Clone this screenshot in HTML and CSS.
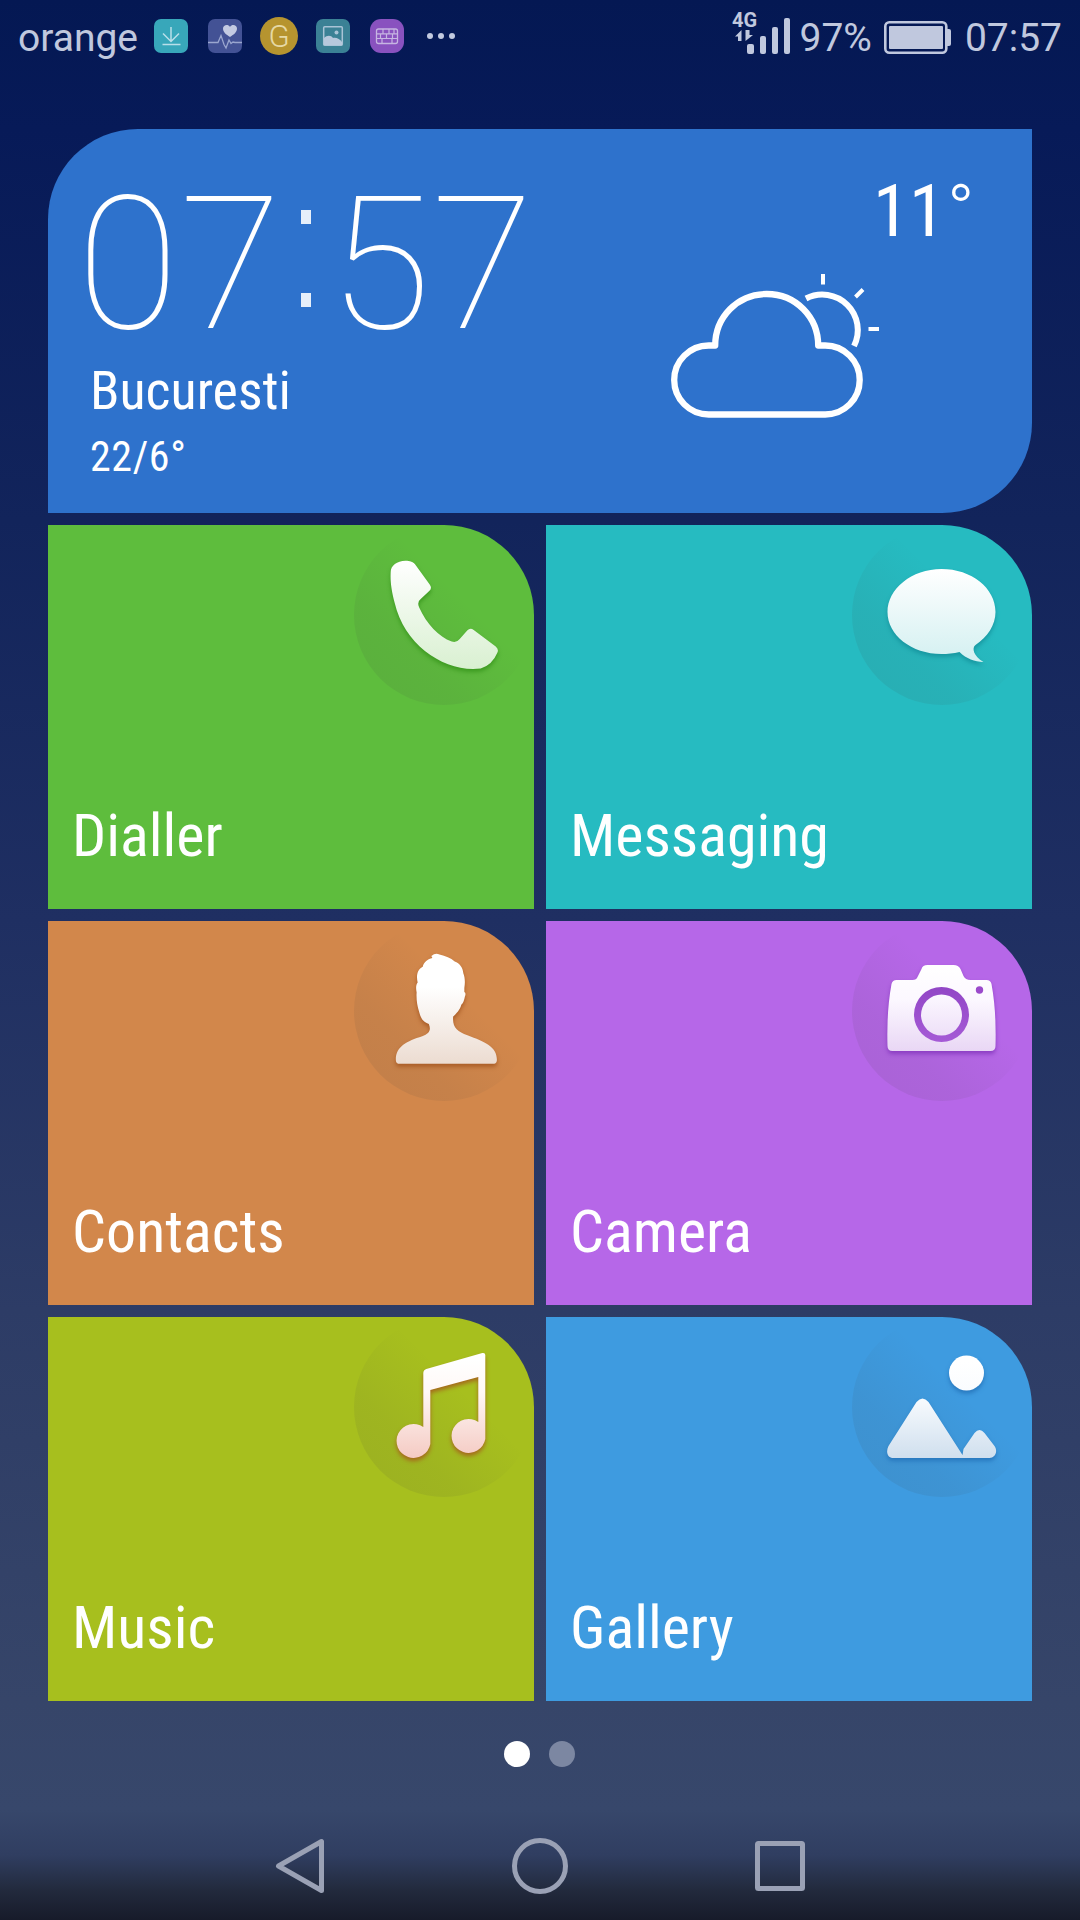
FILE: index.html
```html
<!DOCTYPE html>
<html lang="en">
<head>
<meta charset="utf-8">
<title>Home</title>
<link rel="stylesheet" href="styles.css">
</head>
<body>
<svg class="defs" width="0" height="0" aria-hidden="true">
  <defs>
    <linearGradient id="g-green" x1="0" y1="0" x2="0" y2="1"><stop offset="0" stop-color="#fff"/><stop offset="1" stop-color="#d9f0d1"/></linearGradient>
    <linearGradient id="g-teal" x1="0" y1="0" x2="0" y2="1"><stop offset="0" stop-color="#fff"/><stop offset="1" stop-color="#d3f0f1"/></linearGradient>
    <linearGradient id="g-orange" x1="0" y1="0" x2="0" y2="1"><stop offset="0" stop-color="#fff"/><stop offset=".3" stop-color="#fff"/><stop offset="1" stop-color="#ecdcd1"/></linearGradient>
    <linearGradient id="g-purple" x1="0" y1="0" x2="0" y2="1"><stop offset="0" stop-color="#fff"/><stop offset=".4" stop-color="#fcf8ff"/><stop offset="1" stop-color="#e9d7f5"/></linearGradient>
    <linearGradient id="g-lens" x1="0" y1="0" x2="0" y2="1"><stop offset="0" stop-color="#fcf8ff"/><stop offset="1" stop-color="#eee0f8"/></linearGradient>
    <linearGradient id="g-ring" x1="0" y1="0" x2="0" y2="1"><stop offset="0" stop-color="#9246c6"/><stop offset="1" stop-color="#a55ad6"/></linearGradient>
    <linearGradient id="g-music" gradientUnits="userSpaceOnUse" x1="0" y1="43" x2="0" y2="150"><stop offset="0" stop-color="#fff"/><stop offset=".3" stop-color="#fff8f6"/><stop offset="1" stop-color="#f3c4bc"/></linearGradient>
    <linearGradient id="g-blue" gradientUnits="userSpaceOnUse" x1="0" y1="45" x2="0" y2="148"><stop offset="0" stop-color="#fff"/><stop offset=".35" stop-color="#f8fbfe"/><stop offset="1" stop-color="#cbdcec"/></linearGradient>
  </defs>
</svg>

<header class="status">
  <span class="carrier">orange</span>
  <div class="notices">
    <svg width="34" height="34" viewBox="0 0 34 34"><rect width="34" height="34" rx="7" fill="#38a7ba"/><path d="M17 8v14M9 14.500l8 8 8-8M8.500 25.500h18" fill="none" stroke="#b9dfe9" stroke-width="1.500"/></svg>
    <svg width="34" height="34" viewBox="0 0 34 34"><rect width="34" height="34" rx="7" fill="#435295"/><path d="M22 18c-4-2.500-7-5-7-8.500C15 6 20 4.500 22 8c2-3.500 7-2 7 1.500 0 3.500-3 6-7 8.500z" fill="#c3cae2"/><path d="M0 23.500h10l3-7 3 9 2 3.500 3-8 2 3.500 2-1.500 2 .5h7" fill="none" stroke="#9aa6cf" stroke-width="1.300"/></svg>
    <svg class="round" width="38" height="38" viewBox="0 0 38 38"><circle cx="19" cy="19" r="19" fill="#b6942f"/><text x="19" y="29.500" class="coin">G</text></svg>
    <svg width="34" height="34" viewBox="0 0 34 34"><rect width="34" height="34" rx="7" fill="#3b8195"/><rect x="7.700" y="7.700" width="18.600" height="18.600" rx="1" fill="none" stroke="#a9c3d6" stroke-width="1.500"/><circle cx="20.500" cy="13.500" r="2" fill="#a9c3d6"/><path d="M8 19c3-3 7-3 9 0 3-1 7 1 9 4v3H8z" fill="#b7c8dc"/></svg>
    <svg width="34" height="34" viewBox="0 0 34 34"><rect width="34" height="34" rx="11" fill="#8952bf"/><rect x="6.500" y="10" width="21" height="14.500" rx="2" fill="none" stroke="#c6b5e2" stroke-width="1.300"/><path d="M6.500 14.800h21M6.500 19.500h21M13 10v4.800M19 10v4.800M24 10v4.800M10.500 14.800v4.700M16.500 14.800v4.700M22.500 14.800v4.700M12 19.500v5M22 19.500v5" stroke="#c6b5e2" stroke-width="1.200"/></svg>
    <svg class="more" width="28" height="6" viewBox="0 0 28 6"><g fill="#c2cae0"><circle cx="3" cy="3" r="3"/><circle cx="14" cy="3" r="3"/><circle cx="25" cy="3" r="3"/></g></svg>
  </div>
  <div class="system">
    <svg class="signal" width="60" height="44" viewBox="0 0 60 44"><text x="0" y="15" class="net">4G</text><g fill="#c0c8de"><rect x="15" y="32" width="7" height="10" rx="2"/><rect x="28" y="24" width="6" height="18" rx="2"/><rect x="40" y="15" width="6" height="27" rx="2"/><rect x="52" y="6" width="6" height="36" rx="2"/><path d="M9.500 18v11H6v-4.500H3zM13.500 18v11L21 23h-3.500v-5z"/></g></svg>
    <span class="percent">97%</span>
    <svg class="battery" width="67" height="33" viewBox="0 0 67 33"><rect x="1.300" y="1.300" width="61" height="30.400" rx="4" fill="none" stroke="#c0c8de" stroke-width="2.600"/><rect x="5" y="5" width="54" height="23" rx="1" fill="#c0c8de"/><path d="M62 8h3a2 2 0 0 1 2 2v13a2 2 0 0 1-2 2h-3z" fill="#c0c8de"/></svg>
    <span class="time">07:57</span>
  </div>
</header>

<main class="tiles">
  <section class="tile weather">
    <div class="now">
      <div class="clock"><span class="hours">07</span><span class="colon">:</span><span class="minutes">57</span></div>
      <div class="city">Bucuresti</div>
      <div class="range">22/6°</div>
    </div>
    <div class="sky">
      <div class="temp">11<span class="degree">°</span></div>
      <svg class="cloud" width="210" height="146" viewBox="0 0 210 146" fill="none" stroke="#fff"><path d="M37.700 139.500a34.500 34.500 0 0 1 0-69h6.500c0-28 22-51.500 51.500-51.500s51.500 23.500 51.500 51.500h7a34.500 34.500 0 0 1 0 69z" stroke-width="6.300" stroke-linejoin="round"/><path d="M135 23.500A35.500 35.500 0 0 1 183 71" stroke-width="6"/><path d="M152-1v10.500M184.500 22l7.500-7.500M197.500 54h10.500" stroke-width="4"/></svg>
    </div>
  </section>

  <section class="tile dialler">
    <svg class="icon" width="180" height="180" viewBox="0 0 180 180"><path d="M36 47C36 40 44 34.500 54 36q4.500.5 6.500 3.500L75 59.500q3 4-1 7L66 74q-4 3-1.500 8.500C72 99 84 112 97 116.500q5 1.500 8-2.500l7.500-8.500q3-3 6.500-.5l22 16.500q3.500 3 1.500 6.500-5 12-16.500 15.500C91 148 50 121 40 78 36.500 65 35.500 56 36 47z" transform="translate(.7 0)" fill="url(#g-green)"/></svg>
    <h2>Dialler</h2>
  </section>
  <section class="tile messaging">
    <svg class="icon" width="180" height="180" viewBox="0 0 180 180"><path d="M90 44c30 0 54 19 54 43 0 13-8 25-20 33-4 3-2 11 8 17-9-.5-17-3-24-10-6 1.500-12 2-18 2-30 0-54-19-54-42s24-43 54-43z" transform="translate(-.5 0)" fill="url(#g-teal)"/></svg>
    <h2>Messaging</h2>
  </section>
  <section class="tile contacts">
    <svg class="icon" width="180" height="180" viewBox="0 0 180 180"><path d="M78 37l-1-2q4-3.500 8-1.500 9 2 15 7c5 2 8 6 8.500 12 1.500 4 2 9 1 15v4q2 1 .5 5-1 6-3.500 8c-1 5-5 9-8 12-1 11 4 15 14 19 18 7 30 12 29 26q-.5 3-4 3H46q-4 0-4-4c0-14 11-19 26-24 7-3 9-6 6.500-12.500-6-2-8-6-9.500-12-2-6-3-14-2.500-20-1-5-.5-8 1-10-2-9 1-14 5-16 1-5 5-8 9.500-9z" transform="matrix(1.015 0 0 .985 -.8 .5)" fill="url(#g-orange)"/></svg>
    <h2>Contacts</h2>
  </section>
  <section class="tile camera">
    <svg class="icon" width="180" height="180" viewBox="0 0 180 180"><g transform="translate(-.5 0)"><path d="M76 44h26q5 0 7 4l3 7q2 4 7 4h16q4 0 5 4 5 27 4 62 0 5-5 5H41q-5 0-5-5-1-35 4-62 1-4 5-4h16q4 0 5-3l4-8q1-4 6-4z" fill="url(#g-purple)"/></g><g class="flat" transform="translate(-.5 0)"><circle cx="90" cy="93.500" r="27.500" fill="url(#g-ring)"/><circle cx="128" cy="69" r="3.700" fill="#9b4acb"/><circle cx="90" cy="94" r="20.500" fill="url(#g-lens)"/></g></svg>
    <h2>Camera</h2>
  </section>
  <section class="tile music">
    <svg class="icon" width="180" height="180" viewBox="0 0 180 180"><path d="M70 56q0-3 3-4l56-16q3-.5 3 2v84a17 17 0 1 1-7-17V60L77 73v54a17 17 0 1 1-7-17z" transform="translate(-.7 0)" fill="url(#g-music)"/></svg>
    <h2>Music</h2>
  </section>
  <section class="tile gallery">
    <svg class="icon" width="180" height="180" viewBox="0 0 180 180"><circle cx="114.500" cy="56" r="17.500" fill="url(#g-blue)"/><path d="M65 85q6-7 12 0l34 53 1-6 11-16q5-6 10 0l10 13c4 6 0 12-5 12H42c-6 0-8-6-5-12z" transform="translate(-.5 0)" fill="url(#g-blue)"/></svg>
    <h2>Gallery</h2>
  </section>
</main>

<div class="pager"><i class="on"></i><i></i></div>

<nav class="nav">
  <svg width="60" height="60" viewBox="0 0 60 60"><path d="M8.500 30 51.500 5.500V54.500z"/></svg>
  <svg width="60" height="60" viewBox="0 0 60 60"><circle cx="30" cy="30" r="25.500"/></svg>
  <svg width="60" height="60" viewBox="0 0 60 60"><rect x="7.500" y="7.500" width="45" height="45" rx="1"/></svg>
</nav>
</body>
</html>
```
FILE: styles.css
```css
* { box-sizing: border-box; }
body {
  margin: 0;
  width: 1080px;
  height: 1920px;
  overflow: hidden;
  display: flex;
  flex-direction: column;
  font-family: "Roboto Condensed", Roboto, "Liberation Sans", sans-serif;
  font-stretch: 75%;
  color: #fff;
  background: linear-gradient(#041853, #071a58 129px, #12245b 520px, #1f2f62 920px, #2d3c66 1310px, #364569 1701px, #37476b 1810px, #303e61 1855px, #222a3d 1890px, #171b2a 1920px);
}
.defs { display: block; height: 0; flex: none; }
.status {
  flex: none;
  height: 129px;
  padding: 0 18px;
  display: flex;
  align-items: flex-start;
  font-family: Roboto, sans-serif;
  font-stretch: 100%;
  font-size: 39px;
  line-height: 76px;
  color: #c0c8de;
}
.carrier { width: 136px; }
.notices { display: flex; align-items: center; height: 72px; gap: 20px; }
.notices .round { margin: 0 -2px; }
.notices .more { margin-left: 3px; }
.coin { font: 300 31px Roboto, sans-serif; fill: #e6d9a6; text-anchor: middle; }
.system { display: flex; margin-left: auto; height: 76px; }
.signal { margin-top: 12px; margin-right: 7px; overflow: visible; }
.net { font: 700 20px Roboto, sans-serif; fill: #c0c8de; }
.battery { margin: 21px 14px 0 12px; }

.tiles {
  flex: none;
  padding: 0 48px;
  display: grid;
  grid-template-columns: 1fr 1fr;
  grid-auto-rows: 384px;
  gap: 12px;
}
.tile {
  display: flex;
  flex-direction: column;
  justify-content: space-between;
  border-top-right-radius: 90px;
  padding-bottom: 43px;
}
.icon {
  align-self: flex-end;
  border-radius: 50%;
  background: linear-gradient(45deg, rgba(60, 60, 60, .11), rgba(60, 60, 60, .08) 30%, rgba(60, 60, 60, 0) 60%);
}
.icon > * { filter: drop-shadow(0 3px 2px var(--shade)); }
.icon > .flat { filter: none; }
.tile h2 {
  margin: 0 0 0 24px;
  font-size: 60px;
  line-height: 60px;
  font-weight: 400;
}
.dialler { background: #5ebd3d; --shade: #3c9a20; }
.messaging { background: #26bbc1; --shade: #1796a0; }
.contacts { background: #d2874b; --shade: #a95c26; }
.camera { background: #b667e8; --shade: #8b3dc2; }
.music { background: #a7bf1e; --shade: #a5681c; }
.gallery { background: #3e9be0; --shade: #2878be; }

.weather {
  grid-column: 1 / -1;
  flex-direction: row;
  justify-content: space-between;
  background: #2e72cc;
  border-radius: 90px 0;
  padding: 0;
}
.now { padding: 42px 0 0 28px; }
.clock {
  display: flex;
  font-family: Roboto, sans-serif;
  font-stretch: 100%;
  font-weight: 150;
  font-size: 186px;
  line-height: 186px;
}
.hours { width: 205px; letter-spacing: 1px; margin-left: 1px; }
/* The bold dots are trimmed to narrow upright blocks. */
.colon {
  width: 52px;
  margin: -18px 0 0 -1px;
  text-align: center;
  font-weight: 700;
  color: #e6effa;
  clip-path: path("M20 57h10v14h-10zM20 140h10v14h-10z");
}
.minutes { margin-left: -4px; letter-spacing: 1px; }
.city { margin: 7px 0 0 14px; font-size: 54px; line-height: 54px; }
.range { margin: 18px 0 0 14px; font-size: 42px; line-height: 42px; letter-spacing: .6px; }
.sky { width: 361px; padding-top: 46px; }
.temp { font-size: 73px; line-height: 73px; padding-left: 202px; }
.degree { font-weight: 300; margin-left: 2px; }
.cloud { display: block; margin-top: 27px; overflow: visible; }

.pager { flex: none; display: flex; justify-content: center; gap: 19px; margin: 40px 2px 0 0; }
.pager i { width: 26px; height: 26px; border-radius: 50%; background: #7c87a2; }
.pager .on { background: #fff; }
.nav {
  flex: none;
  display: flex;
  justify-content: center;
  gap: 180px;
  margin-top: 69px;
  fill: none;
  stroke: #9aa1b5;
  stroke-width: 5;
  stroke-linejoin: round;
}
```
